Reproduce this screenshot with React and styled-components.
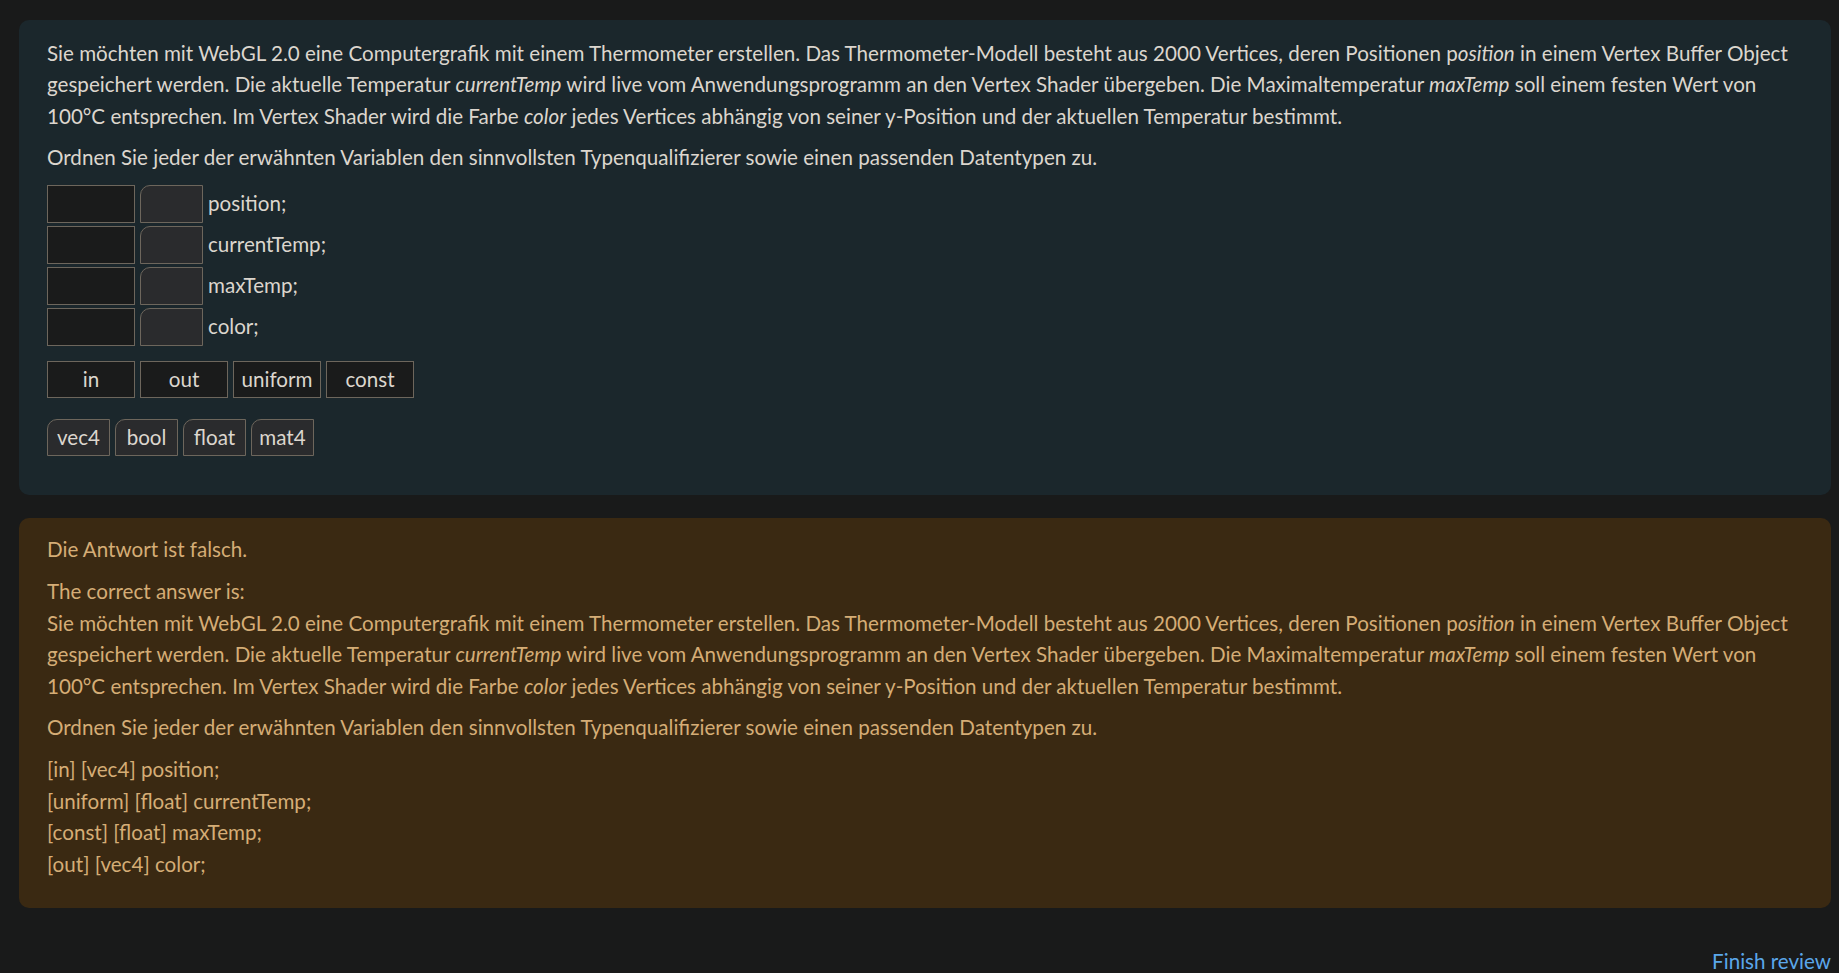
import React from 'react';
import styled, { createGlobalStyle } from 'styled-components';

const GlobalStyle = createGlobalStyle`
  body {
    margin: 0;
    background: #191a1a;
    font-family: Lato, "Noto Sans", sans-serif;
    font-size: 20.6px;
    line-height: 31.6px;
    color: #dcd6ce;
  }
`;

const Page = styled.div`
  padding: 20px 8px 0 19px;
  display: flex;
  flex-direction: column;
  gap: 23px;
`;

const Card = styled.div`
  border-radius: 10px;
  padding: ${(p) => (p.$feedback ? '16.5px 28px 27.5px' : '17.5px 28px 39px')};
  background: ${(p) => (p.$feedback ? '#3a2912' : '#1b272c')};
  color: ${(p) => (p.$feedback ? '#d5ad76' : '#dcd6ce')};
`;

const Para = styled.p`
  margin: 0 0 10px;
  white-space: nowrap;

  &:last-child {
    margin-bottom: 0;
  }
`;

const DropList = styled.div`
  margin-top: 11px;
  display: flex;
  flex-direction: column;
  gap: 3px;
`;

const DropRow = styled.div`
  display: flex;
  align-items: center;
  gap: 5px;
  height: 38px;
`;

const DropBox = styled.span`
  box-sizing: border-box;
  width: ${(p) => (p.$type ? '63px' : '88px')};
  height: 38px;
  border: 1px solid #6d665c;
  background: ${(p) => (p.$type ? '#2a2b2d' : '#1a1b1b')};
  border-top-left-radius: ${(p) => (p.$type ? '10px' : '0')};
`;

const Tray = styled.div`
  display: flex;
  gap: 5px;
  margin-top: ${(p) => (p.$gap || 0)}px;
`;

const DragItem = styled.span`
  box-sizing: border-box;
  display: flex;
  align-items: center;
  justify-content: center;
  width: ${(p) => (p.$type ? '63px' : '88px')};
  height: 37px;
  border: 1px solid #6d665c;
  background: ${(p) => (p.$type ? '#2a2b2d' : '#1a1b1b')};
  border-top-left-radius: ${(p) => (p.$type ? '10px' : '0')};
  color: #dcd6ce;
`;

const Footer = styled.div`
  display: flex;
  justify-content: flex-end;
  padding: 0 8px 0 19px;
  margin-top: 38px;
`;

const FinishLink = styled.a`
  color: #5ba7ea;
  text-decoration: none;
`;

const variables = ['position;', 'currentTemp;', 'maxTemp;', 'color;'];
const qualifiers = ['in', 'out', 'uniform', 'const'];
const types = ['vec4', 'bool', 'float', 'mat4'];

function QuestionText() {
  return (
    <>
      Sie möchten mit WebGL 2.0 eine Computergrafik mit einem Thermometer erstellen. Das Thermometer-Modell besteht aus 2000 Vertices, deren Positionen p<em>osition</em> in einem Vertex Buffer Object
      <br />
      gespeichert werden. Die aktuelle Temperatur <em>currentTemp</em> wird live vom Anwendungsprogramm an den Vertex Shader übergeben. Die Maximaltemperatur <em>maxTemp</em> soll einem festen Wert von
      <br />
      100°C entsprechen. Im Vertex Shader wird die Farbe <em>color</em> jedes Vertices abhängig von seiner y-Position und der aktuellen Temperatur bestimmt.
    </>
  );
}

const prompt = 'Ordnen Sie jeder der erwähnten Variablen den sinnvollsten Typenqualifizierer sowie einen passenden Datentypen zu.';

export default function App() {
  return (
    <>
      <GlobalStyle />
      <Page>
        <Card>
          <Para><QuestionText /></Para>
          <Para>{prompt}</Para>
          <DropList>
            {variables.map((v) => (
              <DropRow key={v}>
                <DropBox />
                <DropBox $type />
                <span>{v}</span>
              </DropRow>
            ))}
          </DropList>
          <Tray $gap={15}>
            {qualifiers.map((q) => (
              <DragItem key={q}>{q}</DragItem>
            ))}
          </Tray>
          <Tray $gap={21}>
            {types.map((t) => (
              <DragItem key={t} $type>{t}</DragItem>
            ))}
          </Tray>
        </Card>

        <Card $feedback>
          <Para>Die Antwort ist falsch.</Para>
          <Para>
            The correct answer is:
            <br />
            <QuestionText />
          </Para>
          <Para>{prompt}</Para>
          <Para>
            [in] [vec4] position;
            <br />
            [uniform] [float] currentTemp;
            <br />
            [const] [float] maxTemp;
            <br />
            [out] [vec4] color;
          </Para>
        </Card>
      </Page>
      <Footer>
        <FinishLink href="#">Finish review</FinishLink>
      </Footer>
    </>
  );
}
